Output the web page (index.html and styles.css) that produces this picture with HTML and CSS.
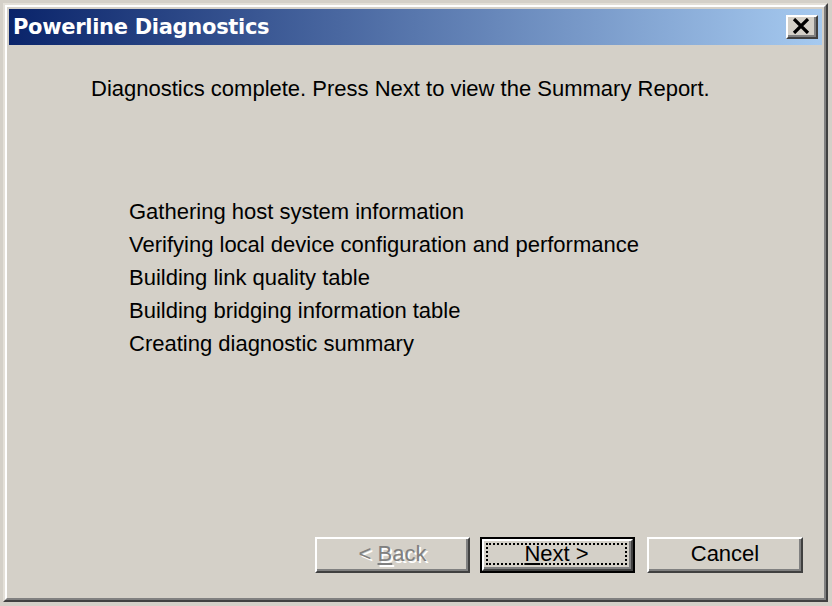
FILE: index.html
```html
<!DOCTYPE html>
<html>
<head>
<meta charset="utf-8">
<link rel="stylesheet" href="styles.css">
</head>
<body>
<div class="window">
  <div class="frame">
    <div class="caption">
      <span class="caption-title">Powerline Diagnostics</span>
      <span class="close-btn">
        <svg width="18" height="16" viewBox="0 0 18 16"><path d="M2 1 L16 15 M16 1 L2 15" stroke="#000" stroke-width="3.2" fill="none"/></svg>
      </span>
    </div>
    <div class="content">
      <p class="intro">Diagnostics complete. Press Next to view the Summary Report.</p>
      <ul class="steps">
        <li>Gathering host system information</li>
        <li>Verifying local device configuration and performance</li>
        <li>Building link quality table</li>
        <li>Building bridging information table</li>
        <li>Creating diagnostic summary</li>
      </ul>
      <div class="buttons">
        <div class="btn btn-disabled"><span class="label">&lt; <u>B</u>ack</span></div>
        <div class="btn btn-default"><div class="btn-inner"><span class="focus"><u>N</u>ext &gt;</span></div></div>
        <div class="btn btn-cancel"><span class="label">Cancel</span></div>
      </div>
    </div>
  </div>
</div>
</body>
</html>
```

FILE: styles.css
```css
html, body {
  margin: 0;
  padding: 0;
  background: #d4d0c8;
}
body {
  width: 832px;
  height: 606px;
  overflow: hidden;
  font-family: "Liberation Sans", Arial, sans-serif;
}
.window {
  margin: 3px 0 0 3px;
  width: 825px;
  height: 599px;
  box-sizing: border-box;
  border-style: solid;
  border-width: 2px;
  border-color: #e4e0d8 #404040 #404040 #e4e0d8;
  background: #d4d0c8;
}
.frame {
  height: 100%;
  box-sizing: border-box;
  border-style: solid;
  border-width: 2px;
  border-color: #ffffff #808080 #808080 #ffffff;
  padding: 2px;
  display: flex;
  flex-direction: column;
}
.caption {
  height: 36px;
  flex: none;
  display: flex;
  align-items: center;
  justify-content: space-between;
  padding: 0 4px 0 4px;
  background: linear-gradient(to right, #0a246a, #a6caf0);
}
.caption-title {
  color: #fff;
  font-family: "DejaVu Sans", Verdana, sans-serif;
  font-weight: bold;
  font-size: 21px;
  letter-spacing: -0.3px;
  line-height: 36px;
}
.close-btn {
  width: 32px;
  height: 24px;
  box-sizing: border-box;
  background: #d4d0c8;
  border-style: solid;
  border-width: 2px;
  border-color: #ffffff #404040 #404040 #ffffff;
  box-shadow: inset -2px -2px 0 #808080;
  display: flex;
  align-items: center;
  justify-content: center;
  padding: 0 2px 2px 0;
}
.close-btn svg { display: block; }
.content {
  flex: 1;
  display: flex;
  flex-direction: column;
  font-size: 22px;
  color: #000;
}
.intro {
  margin: 28px 0 0 82px;
  line-height: 32px;
}
.steps {
  list-style: none;
  margin: 90px 0 0 0;
  padding: 0 0 0 120px;
  line-height: 33px;
}
.buttons {
  margin-top: auto;
  margin-bottom: 23px;
  padding-right: 19px;
  display: flex;
  justify-content: flex-end;
}
.btn {
  height: 36px;
  box-sizing: border-box;
  display: flex;
  align-items: center;
  justify-content: center;
  background: #d4d0c8;
}
.btn-disabled, .btn-cancel {
  border-style: solid;
  border-width: 2px;
  border-color: #ffffff #404040 #404040 #ffffff;
  box-shadow: inset -2px -2px 0 #808080;
}
.btn-disabled {
  width: 155px;
  color: #808080;
  text-shadow: 2px 2px 0 #ffffff;
}
.btn-default {
  width: 155px;
  margin-left: 10px;
  border: 2px solid #000;
}
.btn-inner {
  width: 100%;
  height: 100%;
  box-sizing: border-box;
  border-style: solid;
  border-width: 2px;
  border-color: #ffffff #404040 #404040 #ffffff;
  box-shadow: inset -2px -2px 0 #808080;
  display: flex;
  align-items: center;
  justify-content: center;
  padding: 2px 4px 4px 2px;
}
.focus {
  flex: 1;
  align-self: stretch;
  display: flex;
  align-items: center;
  justify-content: center;
  border: 2px dotted #000;
}
.btn-cancel {
  width: 156px;
  margin-left: 12px;
}
.label {
  line-height: 30px;
  padding-bottom: 2px;
}
u {
  text-decoration-thickness: 2px;
  text-underline-offset: 2px;
}
```
